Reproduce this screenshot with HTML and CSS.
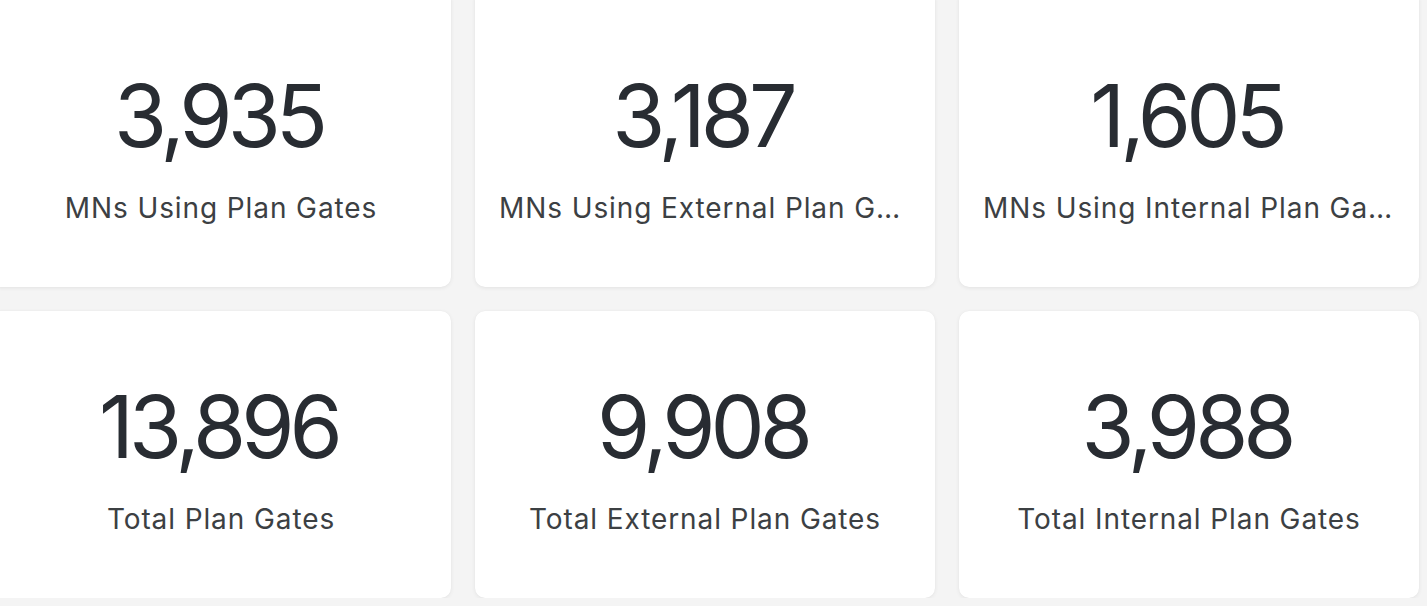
FILE: index.html
```html
<!DOCTYPE html>
<html lang="en">
<head>
<meta charset="utf-8">
<title>Plan Gates</title>
<link rel="stylesheet" href="styles.css">
</head>
<body>
<main class="grid">
  <section class="card">
    <div class="value">3,935</div>
    <div class="label">MNs Using Plan Gates</div>
  </section>
  <section class="card">
    <div class="value">3,187</div>
    <div class="label">MNs Using External Plan Gates</div>
  </section>
  <section class="card">
    <div class="value">1,605</div>
    <div class="label">MNs Using Internal Plan Gates</div>
  </section>
  <section class="card">
    <div class="value">13,896</div>
    <div class="label">Total Plan Gates</div>
  </section>
  <section class="card">
    <div class="value">9,908</div>
    <div class="label">Total External Plan Gates</div>
  </section>
  <section class="card">
    <div class="value">3,988</div>
    <div class="label">Total Internal Plan Gates</div>
  </section>
</main>
</body>
</html>
```

FILE: styles.css
```css
html, body {
  margin: 0;
  padding: 0;
  background: #f4f4f4;
  overflow: hidden;
}

body {
  font-family: Inter, Roboto, sans-serif;
  color: #202124;
}

.grid {
  display: grid;
  grid-template-columns: repeat(3, 460px);
  grid-template-rows: 297px 287px;
  column-gap: 24px;
  row-gap: 24px;
  margin: -10px 0 0 -9px;
}

.card {
  background: #ffffff;
  border-radius: 10px;
  box-shadow: 0 1px 4px rgba(0, 0, 0, 0.07), 0 0 1px rgba(0, 0, 0, 0.05);
  display: flex;
  flex-direction: column;
  justify-content: flex-end;
  align-items: center;
  padding: 0 24px 62px;
  min-width: 0;
}

.value {
  font-size: 86px;
  line-height: 1;
  color: #282c32;
  font-weight: 400;
  letter-spacing: -5px;
  padding-right: 5px;
}

.label {
  margin-top: 32px;
  font-size: 28px;
  line-height: 34px;
  letter-spacing: 0.9px;
  color: #3c4043;
  max-width: 100%;
  white-space: nowrap;
  overflow: hidden;
  text-overflow: ellipsis;
}
```
